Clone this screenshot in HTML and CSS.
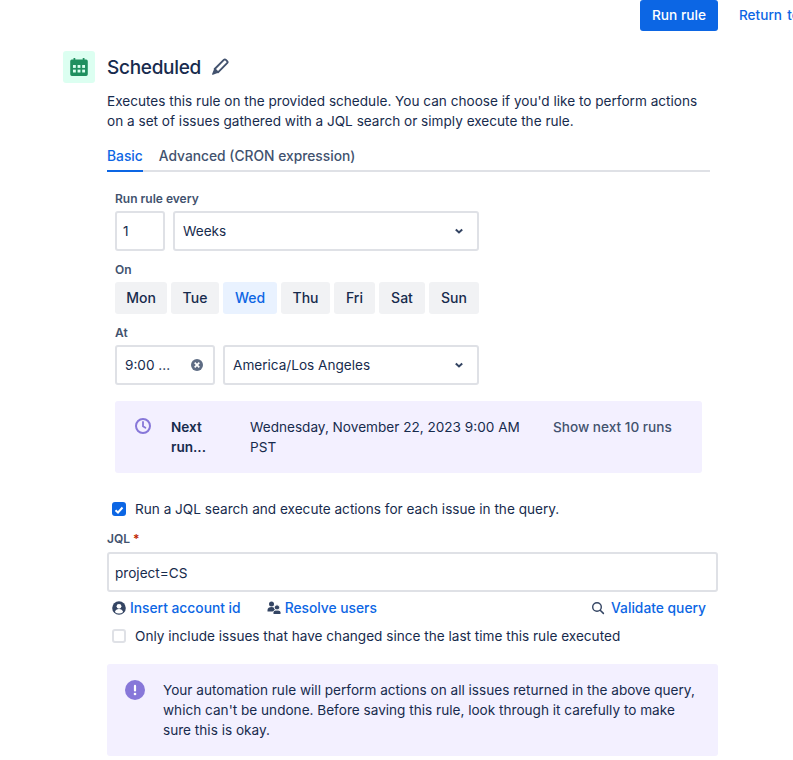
FILE: index.html
```html
<!DOCTYPE html>
<html lang="en">
<head>
<meta charset="utf-8">
<title>Scheduled</title>
<link rel="stylesheet" href="styles.css">
</head>
<body>
<div class="page">
  <div class="topbar">
    <button class="btn-primary">Run rule</button>
    <a class="return-link">Return to list</a>
  </div>
  <div class="header">
    <div class="header-icon">
      <svg width="18" height="18" viewBox="2 1.600 16 16.400"><path fill="#1f8f5f" d="M3.500 3H5V1.600h1.600V3h6.800V1.600H15V3h1.500A1.500 1.500 0 0 1 18 4.500V16.500A1.500 1.500 0 0 1 16.500 18h-13A1.500 1.500 0 0 1 2 16.500V4.500A1.500 1.500 0 0 1 3.500 3z"/><g fill="#dcfff1"><rect x="4.500" y="8" width="2.600" height="2.600"/><rect x="8.700" y="8" width="2.600" height="2.600"/><rect x="12.900" y="8" width="2.600" height="2.600"/><rect x="4.500" y="12.200" width="2.600" height="2.600"/><rect x="8.700" y="12.200" width="2.600" height="2.600"/><rect x="12.900" y="12.200" width="2.600" height="2.600"/></g></svg>
    </div>
    <h1 class="title">Scheduled</h1>
    <svg class="pencil" width="18" height="18" viewBox="0 0 18 18"><path fill="none" stroke="#42526e" stroke-width="1.900" stroke-linejoin="round" d="M12.800 1.900a1.500 1.500 0 0 1 2.100 0l1.200 1.200a1.500 1.500 0 0 1 0 2.100L7 14.300l-3.300-3.300z"/><path fill="#42526e" d="M3.200 10.700l4.100 4.100-5.300 2a.7.7 0 0 1-.9-.9z"/></svg>
  </div>
  <div class="body">
    <p class="desc">Executes this rule on the provided schedule. You can choose if you'd like to perform actions on a set of issues gathered with a JQL search or simply execute the rule.</p>
    <div class="tabs">
      <span class="tab tab-active">Basic</span>
      <span class="tab">Advanced (CRON expression)</span>
    </div>
    <div class="form">
      <div class="label label-first">Run rule every</div>
      <div class="row">
        <div class="field field-num">1</div>
        <div class="field field-select"><span>Weeks</span>
          <svg width="12" height="12" viewBox="0 0 12 12"><path fill="none" stroke="#344563" stroke-width="2" d="M2.800 4.500 6 7.500l3.200-3"/></svg>
        </div>
      </div>
      <div class="label label-on">On</div>
      <div class="days">
        <span class="day day-mon">Mon</span>
        <span class="day day-tue">Tue</span>
        <span class="day day-wed">Wed</span>
        <span class="day day-thu">Thu</span>
        <span class="day day-fri">Fri</span>
        <span class="day day-sat">Sat</span>
        <span class="day day-sun">Sun</span>
      </div>
      <div class="label label-at">At</div>
      <div class="row">
        <div class="field field-time"><span>9:00 ...</span>
          <svg width="14" height="14" viewBox="0 0 14 14"><circle cx="7" cy="7" r="6" fill="#5e6c84"/><path stroke="#fff" stroke-width="1.700" d="M4.700 4.700l4.600 4.600M9.300 4.700l-4.600 4.600"/></svg>
        </div>
        <div class="field field-select field-tz"><span>America/Los Angeles</span>
          <svg width="12" height="12" viewBox="0 0 12 12"><path fill="none" stroke="#344563" stroke-width="2" d="M2.800 4.500 6 7.500l3.200-3"/></svg>
        </div>
      </div>
      <div class="next-run">
        <svg class="clock" width="18" height="18" viewBox="0 0 18 18"><circle cx="9" cy="9" r="7" fill="none" stroke="#8777d9" stroke-width="2"/><path fill="none" stroke="#8777d9" stroke-width="1.800" stroke-linecap="round" d="M9 5v4.300l2.400 1.500"/></svg>
        <div class="next-label">Next run...</div>
        <div class="next-date">Wednesday, November 22, 2023 9:00 AM PST</div>
        <div class="next-show">Show next 10 runs</div>
      </div>
    </div>
    <div class="check-row check-jql">
      <span class="checkbox checkbox-on"><svg width="14" height="14" viewBox="0 0 14 14"><path fill="none" stroke="#fff" stroke-width="2" d="M3.500 7.200 6 9.500l4.500-5"/></svg></span>
      <span>Run a JQL search and execute actions for each issue in the query.</span>
    </div>
    <div class="label label-jql">JQL<span class="req"> *</span></div>
    <div class="field field-jql"><span class="jql-text">project=CS</span></div>
    <div class="links">
      <a class="link link-insert">
        <svg width="14" height="14" viewBox="0 0 14 14"><circle cx="7" cy="7" r="6.800" fill="#344563"/><circle cx="7" cy="5.300" r="2.400" fill="#fff"/><path fill="#fff" d="M2.900 11c.4-2 2-3 4.100-3s3.700 1 4.100 3A5.500 5.500 0 0 1 7 12.600 5.500 5.500 0 0 1 2.900 11z"/></svg>
        <span>Insert account id</span>
      </a>
      <a class="link link-resolve">
        <svg width="14" height="14" viewBox="0 0 14 14"><g fill="#344563"><circle cx="4.500" cy="3" r="2.500"/><path d="M.5 9c0-2 1.800-3 4-3s4 1 4 3v1.500h-8z"/><circle cx="10" cy="6.500" r="2.700" stroke="#fff"/><path stroke="#fff" d="M6 13.500v-2c0-1.500 1.700-2.500 4-2.500s4 1 4 2.500v2z"/></g></svg>
        <span>Resolve users</span>
      </a>
      <a class="link link-validate">
        <svg width="14" height="14" viewBox="0 0 14 14"><circle cx="6" cy="6" r="4.300" fill="none" stroke="#344563" stroke-width="1.400"/><path stroke="#344563" stroke-width="1.500" stroke-linecap="round" d="M9.200 9.200l3.200 3.200"/></svg>
        <span>Validate query</span>
      </a>
    </div>
    <div class="check-row check-only">
      <span class="checkbox checkbox-off"></span>
      <span>Only include issues that have changed since the last time this rule executed</span>
    </div>
    <div class="banner">
      <svg class="banner-icon" width="20" height="20" viewBox="0 0 20 20"><circle cx="10" cy="10" r="10" fill="#8777d9"/><rect x="8.900" y="4.800" width="2.200" height="6.800" rx="1.100" fill="#fff"/><circle cx="10" cy="14" r="1.300" fill="#fff"/></svg>
      <p class="banner-text">Your automation rule will perform actions on all issues returned in the above query, which can't be undone. Before saving this rule, look through it carefully to make sure this is okay.</p>
    </div>
  </div>
</div>
</body>
</html>
```
FILE: styles.css
```css
* { box-sizing: border-box; }
html, body { margin: 0; padding: 0; background: #fff; overflow: hidden; }
body { width: 793px; height: 760px; font-family: Inter, "Noto Sans", sans-serif; font-size: 13.6px; line-height: 20px; color: #172b4d; }
.page { width: 793px; height: 760px; overflow: hidden; }

.topbar { display: flex; align-items: center; height: 31px; padding-left: 640px; white-space: nowrap; }
.btn-primary { flex: none; width: 78px; height: 31px; border: 0; border-radius: 3px; background: #0c66e4; color: #fff; font: 500 13.7px/20px Inter, sans-serif; padding: 0 0 1px; }
.return-link { flex: none; margin-left: 21px; padding-bottom: 1px; color: #0c66e4; font-weight: 500; word-spacing: 1.500px; }

.header { display: flex; align-items: center; margin: 20px 0 0 63px; height: 32px; }
.header-icon { width: 32px; height: 32px; border-radius: 3px; background: #dcfff1; display: flex; align-items: center; justify-content: center; }
.title { margin: 0 0 0 12px; padding-top: 1px; font-size: 19px; line-height: 32px; font-weight: 500; letter-spacing: -0.3px; color: #172b4d; }
.pencil { margin-left: 10px; }

.body { margin-left: 107px; width: 611px; }
.desc { margin: 8px 0 0; width: 600px; }

.tabs { display: flex; gap: 16px; width: 603px; margin-top: 15px; height: 26px; border-bottom: 2px solid #dfe1e6; color: #42526e; font-weight: 500; font-size: 13.8px; }
.tab { height: 26px; display: block; }
.tab-active { color: #0c66e4; border-bottom: 2px solid #0c66e4; }

.form { padding-left: 8px; width: 595px; }
.label { font-size: 12px; line-height: 16px; font-weight: 600; color: #42526e; }
.label-first { margin-top: 19px; }
.label-on { margin-top: 11px; }
.label-at { margin-top: 11px; }

.row { display: flex; gap: 8px; margin-top: 4px; width: 364px; }
.field { height: 40px; border: 2px solid #dfe1e6; border-radius: 3px; background: #fff; display: flex; align-items: center; padding: 0 8px; color: #172b4d; }
.field-num { width: 50px; padding-left: 6px; }
.field-select { flex: 1; justify-content: space-between; padding-right: 12px; }
.field-time { width: 100px; justify-content: space-between; padding-right: 9px; padding-left: 8px; }
.field-tz { padding-left: 8px; }

.days { display: flex; gap: 4px; margin-top: 4px; }
.day { height: 32px; background: #f1f2f4; border-radius: 3px; display: flex; align-items: center; justify-content: center; font-weight: 500; font-size: 14px; color: #172b4d; }
.day-mon { width: 52px; }
.day-tue { width: 48px; }
.day-wed { width: 54px; background: #e9f2ff; color: #0c66e4; }
.day-thu { width: 49px; }
.day-fri { width: 41px; }
.day-sat { width: 46px; }
.day-sun { width: 50px; }

.next-run { display: flex; align-items: flex-start; width: 587px; height: 72px; margin-top: 16px; padding: 16px 16px 0 19px; border-radius: 3px; background: #f3f0ff; }
.clock { flex: none; margin-right: 19px; }
.next-label { width: 79px; flex: none; font-weight: 600; padding-right: 30px; }
.next-date { width: 303px; flex: none; padding-right: 20px; }
.next-show { white-space: nowrap; color: #42526e; font-weight: 500; }

.check-row { display: flex; align-items: center; gap: 9px; padding-left: 5px; color: #172b4d; }
.check-jql { margin-top: 26px; }
.check-only { margin-top: 8px; }
.checkbox { flex: none; width: 14px; height: 14px; border-radius: 3px; display: block; }
.checkbox-on { background: #0c66e4; }
.checkbox-off { border: 2px solid #dfe1e6; background: #fff; }

.label-jql { margin-top: 12px; }
.req { color: #bf2600; }
.field-jql { margin-top: 5px; padding-left: 6px; }
.jql-text { padding-top: 2px; }

.links { display: flex; align-items: center; height: 20px; margin-top: 6px; padding-left: 5px; padding-right: 12px; font-size: 13.8px; }
.link { display: flex; align-items: center; gap: 4px; color: #0c66e4; font-weight: 500; }
.link-resolve { margin-left: 26px; }
.link-validate { margin-left: auto; gap: 6px; }

.banner { display: flex; width: 611px; height: 92px; margin-top: 18px; padding: 16px 16px 16px 18px; border-radius: 3px; background: #f3f0ff; }
.banner-icon { flex: none; margin: 0 18px 0 0; }
.banner-text { margin: 0; }
```
